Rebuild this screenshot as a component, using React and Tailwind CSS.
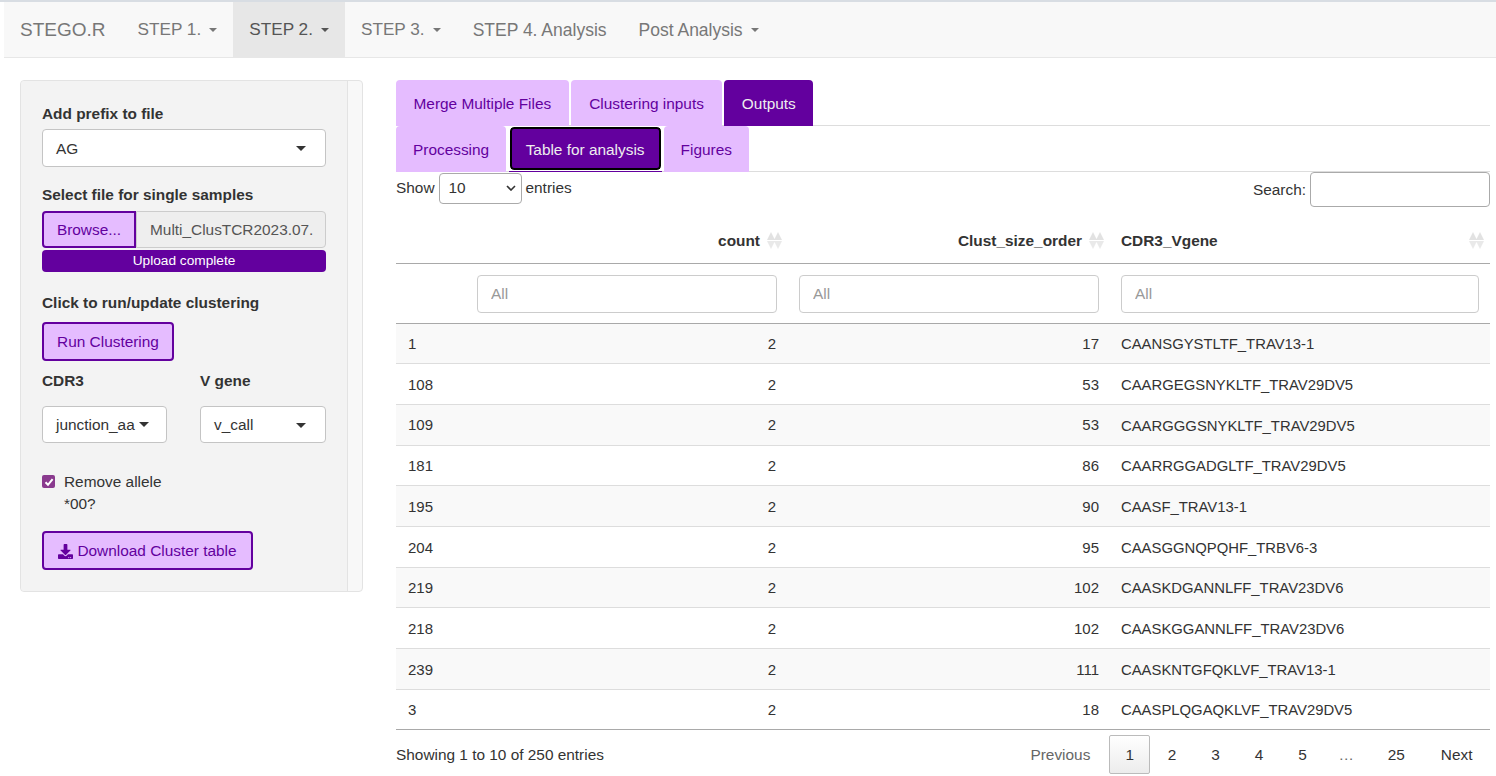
import { FaDownload } from 'react-icons/fa'

const rows = [
  ['1', 2, 17, 'CAANSGYSTLTF_TRAV13-1'],
  ['108', 2, 53, 'CAARGEGSNYKLTF_TRAV29DV5'],
  ['109', 2, 53, 'CAARGGGSNYKLTF_TRAV29DV5'],
  ['181', 2, 86, 'CAARRGGADGLTF_TRAV29DV5'],
  ['195', 2, 90, 'CAASF_TRAV13-1'],
  ['204', 2, 95, 'CAASGGNQPQHF_TRBV6-3'],
  ['219', 2, 102, 'CAASKDGANNLFF_TRAV23DV6'],
  ['218', 2, 102, 'CAASKGGANNLFF_TRAV23DV6'],
  ['239', 2, 111, 'CAASKNTGFQKLVF_TRAV13-1'],
  ['3', 2, 18, 'CAASPLQGAQKLVF_TRAV29DV5'],
]

function Caret() {
  return <span className="ml-2 inline-block w-0 h-0 border-x-[4px] border-t-[4px] border-x-transparent border-t-current align-middle" />
}

function NavItem({ label, caret, active, size = 'text-[17.2px]' }) {
  return (
    <div className={`h-full flex items-center px-4 pt-[1px] ${size} ${active ? 'bg-[#e7e7e7] text-[#555]' : 'text-[#777]'}`}>
      {label}
      {caret && <Caret />}
    </div>
  )
}

function Tab({ label, active, focus, pad = 'px-[17px]' }) {
  if (focus) {
    return (
      <div className="h-[46px] p-px mr-[2px] border-b border-[#63009e]">
        <div className="h-[43px] flex items-center px-[14px] pt-[2px] rounded-[4px] border-2 border-black bg-[#63009e] text-[#eeeeee] outline outline-1 outline-white">
          {label}
        </div>
      </div>
    )
  }
  return (
    <div className={`h-[46px] flex items-center pt-[2px] mr-[2.5px] rounded-t-[4px] ${pad} ${active ? 'bg-[#63009e] text-[#eeeeee]' : 'bg-[#e5bcff] text-[#63009e]'}`}>
      {label}
    </div>
  )
}

function DropSelect({ value, className, caretGap }) {
  return (
    <div className={`flex items-center bg-white border border-[#c4c4c4] rounded-[4px] pl-[13px] pt-[1px] text-[#333] ${className}`}>
      <span>{value}</span>
      <span className={`w-0 h-0 border-x-[5px] border-t-[5px] border-x-transparent border-t-[#333] ${caretGap}`} />
    </div>
  )
}

function SortIcon() {
  return (
    <svg width="15" height="17" viewBox="0 0 15 17" className="shrink-0">
      <g fill="#d8d8d8" fillOpacity="0.75">
        <path d="M4 0 L8 8 H0 Z" />
        <path d="M11 0 L15 8 H7 Z" />
      </g>
      <g fill="#e2e2e2" fillOpacity="0.75">
        <path d="M4 17 L8 9 H0 Z" />
        <path d="M11 17 L15 9 H7 Z" />
      </g>
    </svg>
  )
}

function FilterInput() {
  return (
    <input
      placeholder="All"
      className="w-full h-[38px] mt-[1px] pl-[13px] pr-3 bg-white border border-[#cccccc] rounded-[4px] placeholder:text-[#999] outline-none"
    />
  )
}

function Sidebar() {
  return (
    <aside className="w-[343px] h-[512px] shrink-0 flex border border-[#e3e3e3] rounded-[4px] bg-[#f8f8f8]">
      <div className="w-[327px] shrink-0 bg-[#f3f3f3] border-r border-[#e3e3e3] rounded-l-[4px] pl-[21px] pr-[21px] pt-[23px]">
        <label className="block font-bold leading-[20px] text-[#333]">Add prefix to file</label>
        <DropSelect value="AG" className="h-[38px] mt-[5px] w-full" caretGap="ml-auto mr-[19px]" />

        <label className="block font-bold leading-[20px] mt-[18px] text-[#333]">Select file for single samples</label>
        <div className="flex h-[37px] mt-[6px]">
          <div className="w-[94px] flex items-center justify-center pt-[1px] bg-[#e5bcff] text-[#63009e] border-2 border-[#63009e] rounded-l-[4px]">
            Browse...
          </div>
          <div className="flex-1 flex items-center pl-[13px] pt-[1px] bg-[#eeeeee] border border-[#cccccc] rounded-r-[4px] text-[#555] overflow-hidden whitespace-nowrap">
            Multi_ClusTCR2023.07.
          </div>
        </div>
        <div className="mt-[2px] h-[22px] flex items-center justify-center pt-[1px] rounded-[4px] bg-[#63009e] text-white text-[13.7px]">
          Upload complete
        </div>

        <label className="block font-bold leading-[20px] mt-[21px] text-[#333]">Click to run/update clustering</label>
        <div className="mt-[9px] w-[132px] h-[39px] flex items-center justify-center pt-[1px] bg-[#e5bcff] text-[#63009e] border-2 border-[#63009e] rounded-[4px]">
          Run Clustering
        </div>

        <div className="flex mt-[10px]">
          <div className="w-[158px]">
            <div className="font-bold leading-[20px] text-[#333]">CDR3</div>
            <DropSelect value="junction_aa" className="h-[37px] mt-[15px] w-[125px]" caretGap="ml-[4px] -mt-[2px]" />
          </div>
          <div>
            <div className="font-bold leading-[20px] text-[#333]">V gene</div>
            <DropSelect value="v_call" className="h-[37px] mt-[15px] w-[126px]" caretGap="ml-auto mr-[19px]" />
          </div>
        </div>

        <div className="flex mt-[28px] text-[#333]">
          <span className="w-[13px] h-[13px] mt-[4px] shrink-0 flex items-center justify-center rounded-[2px] bg-[#8a3a8e]">
            <svg width="10" height="10" viewBox="0 0 10 10">
              <path d="M1.5 5.2 L4 7.8 L8.6 2.2" stroke="white" strokeWidth="2" fill="none" />
            </svg>
          </span>
          <span className="ml-[9px] w-[110px] leading-[22px]">Remove allele *00?</span>
        </div>

        <div className="mt-[16px] w-[211px] h-[39px] flex items-center justify-center pt-[1px] bg-[#e5bcff] text-[#63009e] border-2 border-[#63009e] rounded-[4px]">
          <FaDownload className="w-[15px] h-[15px] mr-[4px]" />
          Download Cluster table
        </div>
      </div>
    </aside>
  )
}

function DataTable() {
  return (
    <table className="w-full table-fixed border-collapse text-[#333]">
      <colgroup>
        <col className="w-[70px]" />
        <col className="w-[322px]" />
        <col className="w-[322px]" />
        <col />
      </colgroup>
      <thead>
        <tr className="h-[45px] border-b border-[#a9a9a9] font-bold">
          <th />
          <th className="pr-[6px]">
            <div className="flex items-center justify-end gap-[7px]"><span>count</span><SortIcon /></div>
          </th>
          <th className="pr-[6px]">
            <div className="flex items-center justify-end gap-[7px]"><span>Clust_size_order</span><SortIcon /></div>
          </th>
          <th className="pl-[11px] pr-[6px]">
            <div className="flex items-center justify-between"><span>CDR3_Vgene</span><SortIcon /></div>
          </th>
        </tr>
        <tr className="h-[60px] border-b border-[#a9a9a9] font-normal">
          <th />
          <th className="pl-[11px] pr-[11px] font-normal"><FilterInput /></th>
          <th className="pl-[11px] pr-[11px] font-normal"><FilterInput /></th>
          <th className="pl-[11px] pr-[11px] font-normal"><FilterInput /></th>
        </tr>
      </thead>
      <tbody>
        {rows.map((r, i) => (
          <tr key={r[0]} className={`h-[40.7px] border-b text-[15px] ${i === 9 ? 'border-[#a9a9a9]' : 'border-[#dddddd]'} ${i % 2 === 0 ? 'bg-[#f9f9f9]' : 'bg-white'}`}>
            <td className="pl-[12px] pt-[2px]">{r[0]}</td>
            <td className="pr-[12px] pt-[2px] text-right">{r[1]}</td>
            <td className="pr-[11px] pt-[2px] text-right">{r[2]}</td>
            <td className="pl-[11px] pt-[2px] text-[14.85px]">{r[3]}</td>
          </tr>
        ))}
      </tbody>
    </table>
  )
}

function Pagination() {
  const pages = ['2', '3', '4', '5']
  return (
    <div className="flex items-center h-[39px] text-[#333]">
      <span className="pr-[19px] text-[#666]">Previous</span>
      <span className="w-[41px] h-[39px] flex items-center justify-center border border-[#bbbbbb] rounded-[2px] bg-gradient-to-b from-white to-[#ececec]">1</span>
      {pages.map(p => (
        <span key={p} className="w-[43.5px] text-center">{p}</span>
      ))}
      <span className="w-[43.5px] text-center text-[#666]">…</span>
      <span className="w-[57px] text-center">25</span>
      <span className="pl-[16px] pr-[17.5px]">Next</span>
    </div>
  )
}

export default function App() {
  return (
    <div className="w-[1496px] h-[776px] overflow-hidden bg-white text-[15.4px] text-[#333] font-['Liberation_Sans',Arial,sans-serif]">
      <div className="h-[2px] bg-[#d8dde3]" />
      <nav className="ml-[4px] h-[56px] flex items-center bg-[#f8f8f8] border-b border-[#e7e7e7]">
        <NavItem label="STEGO.R" size="text-[19px]" />
        <NavItem label="STEP 1." caret />
        <NavItem label="STEP 2." caret active />
        <NavItem label="STEP 3." caret />
        <NavItem label="STEP 4. Analysis" size="text-[17.5px]" />
        <NavItem label="Post Analysis" caret size="text-[17.5px]" />
      </nav>

      <div className="flex pl-[20px] pt-[22px]">
        <Sidebar />
        <main className="ml-[33px] w-[1094px]">
          <div className="flex border-b border-[#dddddd] h-[46px]">
            <Tab label="Merge Multiple Files" pad="px-[17.5px]" />
            <Tab label="Clustering inputs" pad="px-[18px]" />
            <Tab label="Outputs" active pad="px-[17.5px]" />
          </div>
          <div className="flex border-b border-[#dddddd] h-[46px]">
            <Tab label="Processing" />
            <Tab label="Table for analysis" focus />
            <Tab label="Figures" />
          </div>

          <div className="flex justify-between items-start">
            <div className="flex items-center h-[32px]">
              <span>Show</span>
              <div className="ml-[4px] w-[83px] h-[31px] pl-[9px] pr-[5px] flex items-center justify-between bg-white border border-[#aaaaaa] rounded-[4px]">
                <span>10</span>
                <svg width="10" height="6" viewBox="0 0 10 6">
                  <path d="M1 1 L5 5 L9 1" stroke="#333" strokeWidth="1.6" fill="none" />
                </svg>
              </div>
              <span className="ml-[4px]">entries</span>
            </div>
            <div className="flex items-center">
              <span>Search:</span>
              <input className="ml-[4px] w-[180px] h-[35px] bg-white border border-[#aaaaaa] rounded-[4px] outline-none" />
            </div>
          </div>

          <div className="mt-[11px]">
            <DataTable />
          </div>

          <div className="flex justify-between items-center mt-[5px]">
            <span>Showing 1 to 10 of 250 entries</span>
            <Pagination />
          </div>
        </main>
      </div>
    </div>
  )
}
